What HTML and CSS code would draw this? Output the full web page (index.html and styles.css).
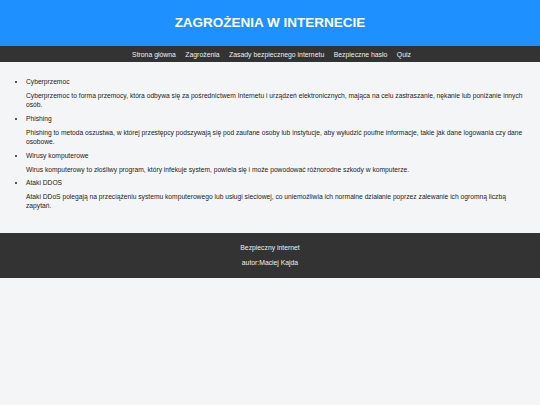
FILE: index.html
```html
<!DOCTYPE html>
<html lang="pl">
<head>
<meta charset="utf-8">
<title>Zagrożenia w internecie</title>
<link rel="stylesheet" href="styles.css">
</head>
<body>
<header class="top">
  <h1 class="title">ZAGROŻENIA W INTERNECIE</h1>
</header>
<nav class="menu">
  <a href="#">Strona główna</a>
  <a href="#">Zagrożenia</a>
  <a href="#">Zasady bezpiecznego internetu</a>
  <a href="#">Bezpieczne hasło</a>
  <a href="#">Quiz</a>
</nav>
<main class="content">
  <ul class="threats">
    <li>Cyberprzemoc
      <p>Cyberprzemoc to forma przemocy, która odbywa się za pośrednictwem Internetu i urządzeń elektronicznych, mająca na celu zastraszanie, nękanie lub poniżanie innych osób.</p>
    </li>
    <li>Phishing
      <p>Phishing to metoda oszustwa, w której przestępcy podszywają się pod zaufane osoby lub instytucje, aby wyłudzić poufne informacje, takie jak dane logowania czy dane osobowe.</p>
    </li>
    <li>Wirusy komputerowe
      <p>Wirus komputerowy to złośliwy program, który infekuje system, powiela się i może powodować różnorodne szkody w komputerze.</p>
    </li>
    <li>Ataki DDOS
      <p>Ataki DDoS polegają na przeciążeniu systemu komputerowego lub usługi sieciowej, co uniemożliwia ich normalne działanie poprzez zalewanie ich ogromną liczbą zapytań.</p>
    </li>
  </ul>
</main>
<footer class="bottom">
  <p>Bezpieczny internet</p>
  <p>autor:Maciej Kajda</p>
</footer>
</body>
</html>
```
FILE: styles.css
```css
html, body {
  margin: 0;
  padding: 0;
  background: #f4f5f7;
  font-family: "Liberation Sans", Arial, sans-serif;
  color: #222;
}
.top {
  background: #1e90ff;
  height: 46px;
  display: flex;
  align-items: center;
  justify-content: center;
}
.title {
  margin: 0;
  color: #fff;
  font-size: 13.5px;
  font-weight: bold;
  line-height: 16px;
}
.menu {
  background: #333;
  height: 16px;
  display: flex;
  justify-content: center;
  align-items: center;
  gap: 9.5px;
  padding-left: 3px;
}
.menu a {
  color: #eee;
  text-decoration: none;
  font-size: 6.85px;
  line-height: 9px;
}
.content {
  padding: 15px 10px 18px 6px;
}
.threats {
  margin: 0;
  padding-left: 20px;
  font-size: 6.7px;
  line-height: 9px;
}
.threats li {
  margin-bottom: 4.8px;
}
.threats p {
  margin: 5px 0 0;
}
.bottom {
  background: #333;
  color: #eee;
  text-align: center;
  font-size: 6.8px;
  line-height: 9px;
  padding: 10px 0 11px;
}
.bottom p {
  margin: 0;
}
.bottom p + p {
  margin-top: 6px;
}
```
